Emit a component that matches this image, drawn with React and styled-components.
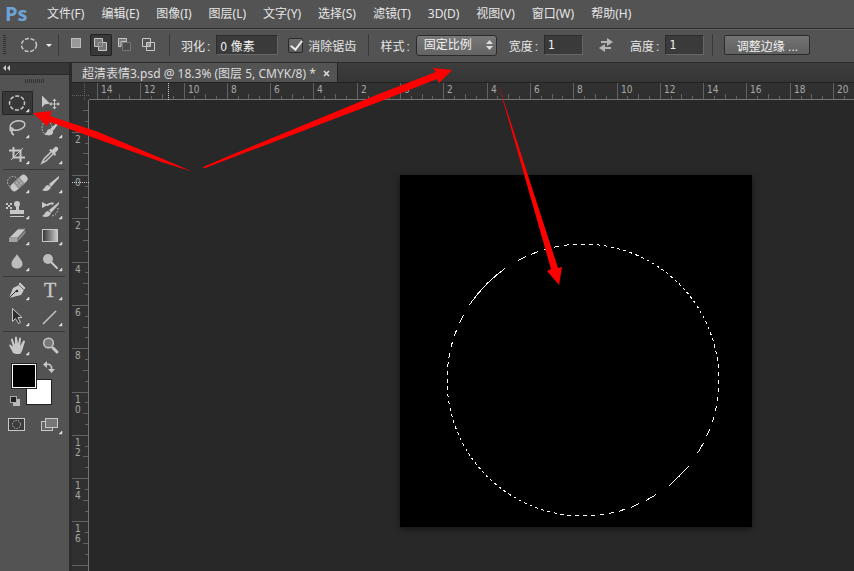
import React, { useState } from 'react';
import styled, { createGlobalStyle } from 'styled-components';

const UI_FONT = '"Noto Sans", "Noto Sans CJK SC", sans-serif';
const LABEL_FONT = '"Liberation Sans", "Noto Sans CJK SC", sans-serif';
const DIGIT_FONT = '"DejaVu Sans Condensed", "DejaVu Sans", "Noto Sans CJK SC", sans-serif';

const GlobalStyle = createGlobalStyle`
    * {
        box-sizing: border-box;
    }
    body {
        margin: 0;
        background: #282828;
        color: #e6e6e6;
        font-family: ${UI_FONT};
        font-size: 12px;
    }
    button, input, select {
        margin: 0;
        padding: 0;
        border: 0;
        background: none;
        color: inherit;
        font: inherit;
    }
    svg {
        display: block;
    }
`;

const Window = styled.div`
    position: relative;
    display: flex;
    flex-direction: column;
    min-height: 100vh;
    overflow: hidden;
`;

const MenuBar = styled.nav`
    display: flex;
    align-items: center;
    gap: 17px;
    height: 29px;
    padding-left: 5px;
    background: #535353;
    border-bottom: 1px solid #2a2a2a;
`;

const Logo = styled.span`
    width: 25px;
    color: #6ea3d8;
    font-family: "Open Sans", "Noto Sans", sans-serif;
    font-size: 20px;
    line-height: 26px;
    font-weight: 700;
`;

const MenuItem = styled.button`
    line-height: 28px;
    white-space: nowrap;
`;

const OptionsBar = styled.div`
    display: flex;
    align-items: center;
    height: 34px;
    padding: 0 3px 2px;
    background: #535353;
    border-top: 1px solid #636363;
    border-bottom: 1px solid #2a2a2a;
    font-family: ${LABEL_FONT};
    white-space: nowrap;
`;

const Grip = styled.span`
    flex: none;
    width: ${(props) => (props.$wide ? '20px' : '3px')};
    height: ${(props) => (props.$wide ? '4px' : '20px')};
    background: repeating-linear-gradient(
        ${(props) => (props.$wide ? '90deg' : '180deg')},
        #333 0 1px,
        #535353 1px 2px
    );
`;

const PresetButton = styled.button`
    width: 34px;
    height: 22px;
    margin: 0 4px 0 14px;
`;

const Separator = styled.span`
    flex: none;
    width: 1px;
    height: 22px;
    margin: 0 ${(props) => props.$after || 11}px 0 ${(props) => props.$before || 0}px;
    background: #3a3a3a;
`;

const ModeGroup = styled.div`
    display: flex;
    gap: 2px;
    margin-right: 9px;
`;

const ModeButton = styled.button`
    width: 22px;
    height: 22px;
    border-radius: 2px;
    background: ${(props) => (props.$active ? '#383838' : 'transparent')};
    box-shadow: ${(props) => (props.$active ? 'inset 0 0 0 1px #222' : 'none')};
`;

const Field = styled.label`
    display: flex;
    align-items: center;
    gap: 6px;
    margin-left: ${(props) => props.$before || 0}px;
`;

const Caption = styled.span`
    &::after {
        content: ':';
        margin-left: 2px;
    }
`;

const NumberBox = styled.input`
    width: ${(props) => props.$width}px;
    height: 20px;
    padding-left: 3px;
    background: #3a3a3a;
    border: 1px solid #2c2c2c;
    border-bottom-color: #666;
    border-right-color: #666;
    font-family: ${DIGIT_FONT};
    color: #f2f2f2;
`;

const CheckLabel = styled.label`
    display: flex;
    align-items: center;
    gap: 5px;
    margin-left: 10px;
`;

const CheckBox = styled.input`
    appearance: none;
    width: 15px;
    height: 15px;
    border: 1px solid #2b2b2b;
    border-radius: 2px;
    background: linear-gradient(#6b6b6b, #5c5c5c);
    &:checked::after {
        content: '';
        display: block;
        width: 5px;
        height: 10px;
        margin: -1px 0 0 4px;
        border: solid #e8e8e8;
        border-width: 0 2px 2px 0;
        transform: rotate(38deg);
    }
`;

const SelectWrap = styled.span`
    display: grid;
    align-items: center;
    width: 81px;
    height: 21px;
    border: 1px solid #2b2b2b;
    border-radius: 3px;
    background: linear-gradient(#777, #636363);
    & > * {
        grid-area: 1 / 1;
    }
    & > svg {
        justify-self: end;
        margin-right: 3px;
        pointer-events: none;
    }
`;

const StyleSelect = styled.select`
    appearance: none;
    width: 100%;
    height: 19px;
    padding: 0 7px;
    color: #f2f2f2;
    option {
        background: #535353;
    }
`;

const SwapButton = styled.button`
    width: 16px;
    height: 16px;
    margin: 0 16px 0 15px;
`;

const RefineButton = styled.button`
    width: 86px;
    height: 20px;
    border: 1px solid #2b2b2b;
    border-radius: 2px;
    background: linear-gradient(#747474, #606060);
    color: #f2f2f2;
`;

const Workspace = styled.div`
    display: flex;
    flex: 1;
`;

const ToolPanel = styled.aside`
    flex: none;
    width: 72px;
    background: #535353;
    border-right: 3px solid #2b2b2b;
`;

const PanelHeader = styled.button`
    display: block;
    width: 100%;
    height: 12px;
    padding-left: 3px;
    background: #373737;
    border-bottom: 1px solid #2a2a2a;
`;

const GripRow = styled.div`
    display: flex;
    justify-content: center;
    height: 15px;
    padding-top: 4px;
`;

const ToolRows = styled.div`
    display: grid;
    grid-template-columns: 33px 33px;
    padding-left: 1px;
`;

const ToolDivider = styled.div`
    height: 1px;
    margin: 1px 4px 1px 3px;
    background: #393939;
`;

const ToolButton = styled.button`
    width: 33px;
    height: 26px;
    border-radius: 3px;
    background: ${(props) => (props.$active ? '#383838' : 'transparent')};
    box-shadow: ${(props) => (props.$active ? 'inset 0 0 0 1px #535353, inset 0 0 0 2px #252525' : 'none')};
`;

const Swatches = styled.div`
    position: relative;
    height: 53px;
`;

const Swatch = styled.button`
    position: absolute;
    left: ${(props) => props.$left}px;
    top: ${(props) => props.$top}px;
    width: 26px;
    height: 26px;
    border: 1px solid #222;
    background: ${(props) => props.$color};
    box-shadow: inset 0 0 0 1px #fff;
`;

const SmallTool = styled.button`
    position: absolute;
    left: ${(props) => props.$left}px;
    top: ${(props) => props.$top}px;
    width: 12px;
    height: 12px;
`;

const Main = styled.main`
    display: flex;
    flex-direction: column;
    flex: 1;
    min-width: 0;
`;

const TabStrip = styled.div`
    display: flex;
    height: 20px;
    background: linear-gradient(#3d3d3d, #353535);
    border-bottom: 1px solid #222;
`;

const Tab = styled.div`
    display: flex;
    align-items: center;
    gap: 6px;
    padding: 2px 6px 0 10px;
    background: #535353;
    border-right: 1px solid #222;
    color: #dcdcdc;
    line-height: 17px;
    white-space: nowrap;
`;

const CloseTab = styled.button`
    width: 9px;
    height: 9px;
`;

const Sheet = styled.div`
    display: grid;
    grid-template-columns: 17px 1fr;
    grid-template-rows: 17px 1fr;
    flex: 1;
    background: #282828;
`;

const RulerSvg = styled.svg`
    width: 100%;
    height: 100%;
    background: #303030;
    fill: #a8a8a8;
    font-family: ${DIGIT_FONT};
    font-size: 10px;
    overflow: hidden;
`;

const Pasteboard = styled.div`
    position: relative;
    overflow: hidden;
`;

const Artboard = styled.div`
    position: absolute;
    left: 311px;
    top: 75px;
    width: 352px;
    height: 352px;
    background: #000;
    box-shadow: 0 2px 6px rgba(0, 0, 0, 0.5);
`;

const Annotations = styled.svg`
    position: absolute;
    inset: 0;
    width: 100%;
    height: 100%;
    fill: #f00;
    pointer-events: none;
`;

const menus = ['文件(F)', '编辑(E)', '图像(I)', '图层(L)', '文字(Y)', '选择(S)', '滤镜(T)', '3D(D)', '视图(V)', '窗口(W)', '帮助(H)'];

const L = '#c8c8c8';
const D = '#2e2e2e';

const brush = (
    <>
        <path d="M25 5 15 13l2 3 8-9z" fill={L} />
        <path d="M14 14c-3 0-3 4-6 5 3 2 8 1 9-3z" fill={L} />
    </>
);

const icons = {
    marquee: <ellipse cx="16" cy="13" rx="7.5" ry="7" fill="none" stroke={L} strokeWidth="1.5" strokeDasharray="4 1.7" strokeDashoffset="2" />,
    move: (
        <>
            <path d="M8 5.500v12l2.500-3 5.500-1z" fill={L} />
            <path d="M20.500 9.500v9M16 14h9" stroke={L} />
            <path d="m18.500 11 2-2.500 2 2.500zm0 6 2 2.500 2-2.500zM17.500 12 15 14l2.500 2zm6 0 2.500 2-2.500 2z" fill={L} />
        </>
    ),
    lasso: (
        <g fill="none" stroke={L} strokeWidth="1.500">
            <ellipse cx="16.500" cy="9.500" rx="7.500" ry="4.500" transform="rotate(-12 16.500 9.500)" />
            <circle cx="10.500" cy="13.500" r="1.500" />
            <path d="M11 15c-1 2 0 3 2 4" />
        </g>
    ),
    quick: (
        <>
            <ellipse cx="13" cy="12" rx="5" ry="6.500" fill="none" stroke={L} strokeDasharray="1.500 1.500" />
            <path d="m25 5-9 8 3 2 6-8z" fill={L} />
            <path d="M16 13c-4 0-2 4-6 5 5 3 10 1 9-3z" fill={L} />
        </>
    ),
    crop: (
        <>
            <path d="M12.500 5v10.500H24M8 8.500h11.500V20" fill="none" stroke={L} strokeWidth="2" />
            <path d="m10 18 12-12" stroke={L} />
        </>
    ),
    dropper: (
        <>
            <path d="m17 10-7 7-2 4 4-2 7-7" fill="#555" stroke={L} strokeWidth="1.500" />
            <path d="m15 8 6 6 1-2-1-1 3-3c1-2-1-4-3-3l-3 3-1-1z" fill={L} />
        </>
    ),
    heal: (
        <>
            <circle cx="12" cy="11" r="5.500" fill="none" stroke={L} strokeDasharray="1.500 1.500" />
            <g transform="rotate(-43 18 12)">
                <rect x="8" y="8" width="20" height="8" rx="3.500" fill={L} />
                <rect x="14" y="8" width="8" height="8" fill="#929292" />
                <path d="M16 10h1v1h-1zm3 0h1v1h-1zm-3 3h1v1h-1zm3 0h1v1h-1z" fill="#eee" />
            </g>
        </>
    ),
    brush,
    stamp: (
        <>
            <path d="M5 6h2v2h2V6h2v2H9v2h2v2H9v-2H7v2H5v-2h2V8H5z" fill={L} />
            <circle cx="16" cy="7" r="3" fill={L} />
            <path d="M15 9h3v4h5v4H9v-4h6zM9 19h14v1H9z" fill={L} />
        </>
    ),
    history: (
        <>
            {brush}
            <path d="M8 11V5l6 3zM12 8c2-2 5-3 8-2l-1 2c-2-1-4 0-5 1z" fill={L} />
            <path d="M24 11c0 4-2 7-6 8" fill="none" stroke={L} strokeDasharray="1.500 1.500" />
        </>
    ),
    eraser: (
        <>
            <path d="m8 15 9-9h8l-8 9z" fill={L} stroke="#777" />
            <path d="M8 15h9v4H8z" fill="#a3a3a3" />
            <path d="m17 15 8-9v4l-8 9z" fill="#8a8a8a" stroke={D} strokeWidth=".5" />
        </>
    ),
    gradient: <rect x="8.500" y="6.500" width="15" height="12" fill="url(#toolGradient)" stroke={L} />,
    blur: <path d="M16 5c2 4 5.500 6 5.500 10 0 6-11 6-11 0C10.500 11 14 9 16 5z" fill="#bdbdbd" />,
    dodge: (
        <>
            <path d="m17 13 6 6" stroke={L} strokeWidth="2" strokeLinecap="round" />
            <circle cx="14" cy="10" r="5" fill="#bdbdbd" />
        </>
    ),
    pen: (
        <>
            <path d="m8 20 4-10 6-3 5 5-3 5z" fill={L} />
            <path d="m8 20 7-7" stroke={D} />
            <circle cx="16" cy="13" r="1.300" fill={D} />
            <path d="m19 4 6 6-2 2-6-6z" fill={L} stroke={D} strokeWidth=".5" />
        </>
    ),
    type: (
        <text x="16" y="19" textAnchor="middle" fill={L} stroke={L} strokeWidth=".4" fontFamily="Liberation Serif, serif" fontSize="20">T</text>
    ),
    select: <path d="M11.500 4.500v13l3-3 3 5 2-1-2.500-5h4z" fill={D} stroke={L} />,
    line: <path d="M9 20 22 7" stroke={L} strokeWidth="1.500" />,
    hand: (
        <path d="M12 20c-1-3-3-5-4-8 1-1 2 0 4 2L10 7c0-2 2-2 2 0l2 5V5c0-2 2-2 2 0l1 6 1-5c0-2 2-2 2 0l-1 7 3-5c1-1 2 0 2 1-2 4-2 9-5 12h-4z" fill={L} />
    ),
    zoom: (
        <>
            <path d="m19 15 4 4" stroke={L} strokeWidth="3" strokeLinecap="round" />
            <circle cx="14.500" cy="10" r="4.800" fill="#777" stroke={L} strokeWidth="1.500" />
        </>
    ),
    mask: (
        <>
            <rect x="7.500" y="6.500" width="16" height="12" fill="#3c3c3c" stroke={L} />
            <circle cx="15.500" cy="12.500" r="4" fill="none" stroke="#eee" strokeDasharray="1 1.500" />
        </>
    ),
    screen: (
        <>
            <rect x="7.500" y="9.500" width="11" height="9" fill="#666" stroke={L} />
            <rect x="11.500" y="6.500" width="12" height="9" fill="#777" stroke={L} />
        </>
    ),
};

const toolGroups = [
    [['marquee', '椭圆选框'], ['move', '移动'], ['lasso', '套索'], ['quick', '快速选择'], ['crop', '裁剪'], ['dropper', '吸管']],
    [['heal', '修复画笔'], ['brush', '画笔'], ['stamp', '图章'], ['history', '历史画笔'], ['eraser', '橡皮擦'], ['gradient', '渐变'], ['blur', '模糊'], ['dodge', '减淡']],
    [['pen', '钢笔'], ['type', '文字'], ['select', '路径选择'], ['line', '直线']],
    [['hand', '抓手'], ['zoom', '缩放']],
];

const Tool = ({ name, label, active, onClick }) => (
    <ToolButton aria-label={label} $active={active} onClick={onClick}>
        <svg width="33" height="26">
            {icons[name]}
            {!['move', 'zoom', 'mask'].includes(name) && <path d="M28 19v3h-3z" fill="#ddd" stroke="#ddd" strokeWidth=".5" />}
        </svg>
    </ToolButton>
);

const ModeIcon = ({ kind }) => (
    <svg width="22" height="22">
        {kind === 'new' && <rect x="5.500" y="4.500" width="9" height="9" fill="#999" stroke="#bbb" />}
        {kind === 'add' && <path d="M4.500 4.500h8v4h4v8h-8v-4h-4z" fill="#777" stroke={L} />}
        {kind === 'add' && <path d="M8.500 12.500v-4h4v4z" fill="none" stroke="#999" />}
        {kind === 'subtract' && <path d="M8.500 8.500h8v8h-8z" fill="#4c4c4c" stroke="#777" />}
        {kind === 'subtract' && <path d="M12.500 7V4.500h-8v8H7v-5h5.500z" fill="#777" stroke={L} />}
        {kind === 'intersect' && <path d="M4.500 4.500h8v8h-8zM8.500 8.500h8v8h-8z" fill="none" stroke={L} />}
        {kind === 'intersect' && <path d="M9 9h3v3H9z" fill="#999" />}
    </svg>
);

// one ruler unit is two centimetres of the document, split in four
const UNIT = 43.3;

const Ruler = ({ vertical, origin, cursor, length }) => {
    const step = UNIT / 4;
    const first = Math.ceil(-origin / step);
    const last = Math.floor((length - origin) / step);
    const ticks = [];
    for (let i = first; i <= last; i++) {
        const pos = Math.round(origin + i * step);
        const size = i % 4 === 0 ? 17 : i % 2 === 0 ? 6 : 4;
        const label = String(Math.abs(i / 2));
        ticks.push(
            <g key={i}>
                {vertical
                    ? <rect x={17 - size} y={pos} width={size} height="1" fill="#626262" />
                    : <rect x={pos} y={17 - size} width="1" height={size} fill="#626262" />}
                {i % 4 === 0 && !vertical && <text x={pos + 4} y="10">{label}</text>}
                {i % 4 === 0 && vertical && label.split('').map((digit, n) => (
                    pos + n * 10 < length - 10 && <text key={n} x="3" y={pos + 11 + n * 10}>{digit}</text>
                ))}
            </g>
        );
    }
    return (
        <RulerSvg>
            {ticks}
            {vertical
                ? <rect x="16" width="1" height="100%" fill="#747474" />
                : <rect y="16" width="100%" height="1" fill="#747474" />}
            {vertical
                ? <path d={`M0 ${cursor}.5h17`} stroke="#ccc" strokeDasharray="1 1" />
                : <path d={`M${cursor}.5 0v17`} stroke="#ccc" strokeDasharray="1 1" />}
        </RulerSvg>
    );
};

const Document = () => (
    <Artboard>
        <svg width="352" height="352" shapeRendering="crispEdges">
            <defs>
                <linearGradient id="ants" gradientUnits="userSpaceOnUse" x1="0" y1="0" x2="4" y2="4" spreadMethod="repeat">
                    <stop offset="0" stopColor="#000" />
                    <stop offset=".375" stopColor="#000" />
                    <stop offset=".375" stopColor="#fff" />
                    <stop offset=".875" stopColor="#fff" />
                    <stop offset=".875" stopColor="#000" />
                </linearGradient>
            </defs>
            <circle cx="183" cy="205" r="136" fill="none" stroke="url(#ants)" />
        </svg>
    </Artboard>
);

const App = () => {
    const [tool, setTool] = useState('marquee');
    const [mode, setMode] = useState('add');

    return (
        <Window>
            <GlobalStyle />
            <MenuBar>
                <Logo>Ps</Logo>
                {menus.map((menu) => <MenuItem key={menu}>{menu}</MenuItem>)}
            </MenuBar>

            <OptionsBar>
                <Grip />
                <PresetButton aria-label='工具预设'>
                    <svg width="34" height="22">
                        <ellipse cx="9" cy="11" rx="7.500" ry="6.500" fill="none" stroke={L} strokeWidth="1.500" strokeDasharray="4 1.700" />
                        <path d="M26 10h6l-3 3z" fill="#eee" />
                    </svg>
                </PresetButton>
                <Separator $after={7} />
                <ModeGroup>
                    {['new', 'add', 'subtract', 'intersect'].map((kind) => (
                        <ModeButton key={kind} aria-label={kind} $active={mode === kind} onClick={() => setMode(kind)}>
                            <ModeIcon kind={kind} />
                        </ModeButton>
                    ))}
                </ModeGroup>
                <Separator $after={11} />
                <Field>
                    <Caption>羽化</Caption>
                    <NumberBox $width={62} defaultValue='0 像素' />
                </Field>
                <CheckLabel>
                    <CheckBox type='checkbox' defaultChecked />
                    消除锯齿
                </CheckLabel>
                <Separator $before={12} />
                <Field>
                    <Caption>样式</Caption>
                    <SelectWrap>
                        <StyleSelect defaultValue='固定比例'>
                            <option>正常</option>
                            <option>固定比例</option>
                            <option>固定大小</option>
                        </StyleSelect>
                        <svg width="7" height="11">
                            <path d="M0 4h7L3.500 0zM0 6h7l-3.500 4z" fill="#ddd" />
                        </svg>
                    </SelectWrap>
                </Field>
                <Field $before={12}>
                    <Caption>宽度</Caption>
                    <NumberBox $width={39} defaultValue='1' />
                </Field>
                <SwapButton aria-label='高度和宽度互换'>
                    <svg width="16" height="16">
                        <path d="M3 4h6V1l6 4-6 4V6H3zM13 10H7V7l-6 4 6 4v-3h6z" fill="#b5b5b5" />
                    </svg>
                </SwapButton>
                <Field>
                    <Caption>高度</Caption>
                    <NumberBox $width={39} defaultValue='1' />
                </Field>
                <Separator $before={8} />
                <RefineButton>调整边缘 ...</RefineButton>
            </OptionsBar>

            <Workspace>
                <ToolPanel>
                    <PanelHeader aria-label='折叠'>
                        <svg width="8" height="7">
                            <path d="M3 0v6L0 3zM7 0v6L4 3z" fill="#ccc" />
                        </svg>
                    </PanelHeader>
                    <GripRow><Grip $wide /></GripRow>
                    <svg width="0" height="0">
                        <linearGradient id="toolGradient">
                            <stop offset="0" stopColor="#333" />
                            <stop offset="1" stopColor="#ccc" />
                        </linearGradient>
                    </svg>
                    {toolGroups.map((group, index) => (
                        <React.Fragment key={index}>
                            {index > 0 && <ToolDivider />}
                            <ToolRows>
                                {group.map(([name, label]) => (
                                    <Tool key={name} name={name} label={label} active={tool === name} onClick={() => setTool(name)} />
                                ))}
                            </ToolRows>
                        </React.Fragment>
                    ))}
                    <Swatches>
                        <Swatch aria-label='背景色' $left={26} $top={20} $color='#fff' />
                        <Swatch aria-label='前景色' $left={11} $top={4} $color='#000' />
                        <SmallTool aria-label='切换颜色' $left={43} $top={2}>
                            <svg width="12" height="12">
                                <path d="M3 3.500c4-1 6 1 5.500 5" fill="none" stroke={L} strokeWidth="1.500" />
                                <path d="M4 0v7L0 3.500zM5 8h7l-3.500 4z" fill={L} />
                            </svg>
                        </SmallTool>
                        <SmallTool aria-label='默认颜色' $left={9} $top={36}>
                            <svg width="12" height="12">
                                <rect x="4" y="4" width="7" height="7" fill="#bbb" />
                                <rect x="1.500" y="1.500" width="6" height="6" fill="#222" stroke="#aaa" />
                            </svg>
                        </SmallTool>
                    </Swatches>
                    <ToolRows>
                        <Tool name='mask' label='快速蒙版' />
                        <Tool name='screen' label='屏幕模式' />
                    </ToolRows>
                </ToolPanel>

                <Main>
                    <TabStrip>
                        <Tab>
                            超清表情3.psd @ 18.3% (图层 5, CMYK/8) *
                            <CloseTab aria-label='关闭'>
                                <svg width="9" height="9">
                                    <path d="m2 2 5 5m0-5L2 7" stroke="#ddd" strokeWidth="1.500" />
                                </svg>
                            </CloseTab>
                        </Tab>
                    </TabStrip>
                    <Sheet>
                        <svg width="17" height="17">
                            <rect width="17" height="17" fill="#303030" />
                            <path d="M12.500 0v17M0 12.500h17" stroke="#606060" strokeDasharray="1 1" />
                        </svg>
                        <Ruler origin={311} cursor={79} length={window.innerWidth - 89} />
                        <Ruler vertical origin={75} cursor={82} length={window.innerHeight - 100} />
                        <Pasteboard>
                            <Document />
                        </Pasteboard>
                    </Sheet>
                </Main>
            </Workspace>

            <Annotations>
                <path d="m33 113 19-2-2 5 47 15.500 66 27.500 29 12.500-29-9L97 139l-47-17-3 4z" />
                <path d="m203 167 27-11.500 150-62 56-21.500-3-4 19 2-13 13-2-4-57 22.500-150 57-26 10z" />
                <path d="m498 83 53 186-4 2 12 14 3-18-4 1z" />
            </Annotations>
        </Window>
    );
};

export default App;
